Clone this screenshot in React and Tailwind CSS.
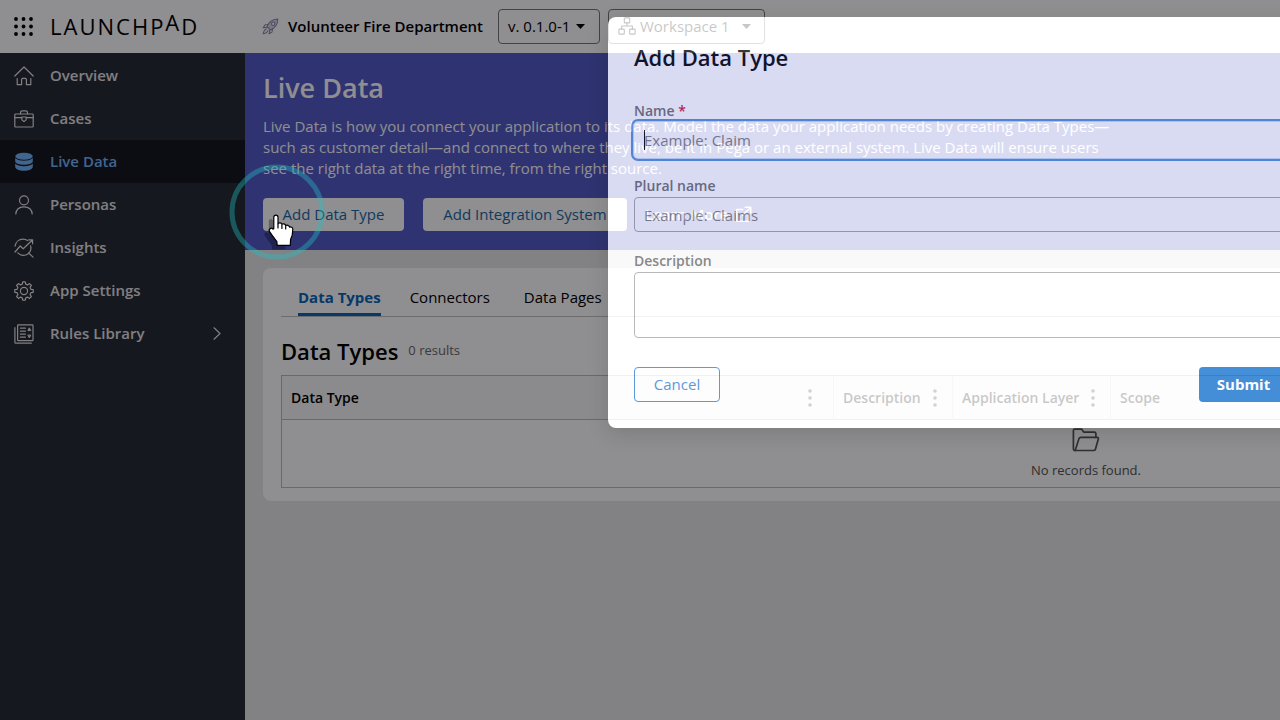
import React from "react";

const line = {
  fill: "none",
  stroke: "currentColor",
  strokeWidth: 1.2,
  strokeLinecap: "round",
  strokeLinejoin: "round",
};

function Icon({ children, size = 20, ...rest }) {
  return (
    <svg width={size} height={size} viewBox="0 0 20 20" aria-hidden="true" {...line} {...rest}>
      {children}
    </svg>
  );
}

const HomeIcon = () => (
  <Icon>
    <path d="M.8 10 10 1l9.200 9M3.200 12.500V18.600H7.600V13.500c0-.8.500-1.200 1.200-1.200h2.400c.7 0 1.200.4 1.200 1.200v5.100h4.400V12.500" />
  </Icon>
);

const CaseIcon = () => (
  <Icon>
    <rect x=".8" y="5" width="18.400" height="13" rx=".8" />
    <path d="M6.500 5V3.600C6.500 2.500 7.300 1.800 8.300 1.800h3.400c1 0 1.800.7 1.800 1.800V5M.8 8.600h6.800M12.400 8.600h6.800M7.800 8h4.400v2.200c0 1.200-1.300 1.800-2.200 2.400-.9-.6-2.200-1.200-2.200-2.400z" />
  </Icon>
);

const DatabaseIcon = () => (
  <Icon fill="currentColor" stroke="none">
    <ellipse cx="10" cy="4.200" rx="8.800" ry="3.500" />
    <path d="M1.200 5.800c1.200 2 5 2.900 8.800 2.900s7.600-.9 8.800-2.900v3.700c-.6 2.100-4.500 3.200-8.800 3.200S1.800 11.600 1.200 9.500z" />
    <path d="M1.200 11.500c1.400 1.900 5 2.700 8.800 2.700s7.400-.8 8.800-2.700v3.600c-.4 2.400-4.400 3.700-8.800 3.700s-8.400-1.300-8.800-3.700z" />
  </Icon>
);

const PersonIcon = () => (
  <Icon>
    <circle cx="10" cy="5.300" r="4.500" />
    <path d="M1.800 19c.3-4.500 3.600-7.200 8.200-7.200s7.900 2.700 8.200 7.200" />
  </Icon>
);

const InsightsIcon = () => (
  <Icon>
    <path d="M1 8.200C1.600 4 4.900 1.200 9 1.200c1.800 0 3.300.5 4.600 1.400M16.600 7.800c1.100 3.800-.7 7.600-4.200 8.900-3.300 1.200-6.500.2-8.600-1.900M14.600 14.800l4.400 4.400" />
    <path d="m1 14 5.200-6 3 2.800L18.400 2M14.600 1.800h4v4" />
  </Icon>
);

const GearIcon = () => (
  <Icon>
    <circle cx="10" cy="10" r="3.600" />
    <path d="M8.300 3.100 8.700.9h2.600l.4 2.200 1.900.8 1.900-1.300 1.900 1.900-1.300 1.900.8 1.900 2.300.4v2.600l-2.300.4-.8 1.900 1.300 1.900-1.900 1.900-1.900-1.300-1.900.8-.4 2.200H8.700l-.4-2.200-1.900-.8-1.900 1.300-1.900-1.900 1.300-1.900-.8-1.900L.8 11.300V8.700l2.300-.4.8-1.900-1.300-1.900 1.900-1.900 1.900 1.300z" />
  </Icon>
);

const RulesIcon = () => (
  <Icon>
    <rect x="3.600" y=".9" width="15.400" height="15.800" rx=".6" />
    <path d="M.9 3.600v14.800c0 .5.300.8.800.8h15.600M6.400 4.200h5M6.400 7.200h5M6.400 10.200h5M6.400 13.200h5" />
    <path d="m14 6.200 1.300-2.400 1.300 2.400zM14 11.400l1.300 2.400 1.300-2.400z" fill="currentColor" strokeWidth="1" />
  </Icon>
);

const RocketIcon = () => (
  <Icon size={17} className="text-[#8587a8]">
    <path d="M6 10.200C7.500 5.500 11.500 1.500 18.600 1.200c-.2 7-4.200 11.200-8.800 12.800z" fill="#d5d6ea" />
    <circle cx="13.200" cy="6.700" r="2" fill="#fff" />
    <path d="M7 7.600 3.400 8.200 1.400 11.600l4.600-.8M12.300 13l-.6 3.600-3.400 2 .9-4.600M5.200 12.800C2.800 13.300 2 15.500 1.400 18.600c2.800-.5 5-1.600 5.600-4" />
  </Icon>
);

const WorkspaceIcon = () => (
  <Icon size={18}>
    <rect x="7" y="1" width="6" height="5.500" rx=".8" />
    <rect x="1" y="13.500" width="6" height="5.500" rx=".8" />
    <rect x="13" y="13.500" width="6" height="5.500" rx=".8" />
    <path d="M10 6.500V10M4 13.500V10h12v3.500" />
  </Icon>
);

const FolderIcon = () => (
  <svg width="28" height="24" viewBox="0 0 28 24" aria-hidden="true" {...line} strokeWidth="1.700">
    <path d="M3.200 22.500C2 22.500 1.400 21.800 1.400 20.800V2.600c0-.9.600-1.500 1.500-1.500h6.600l2.200 3h10.600c1 0 1.600.6 1.600 1.600v3.600" />
    <path d="M3.200 22.500 7 10.600c.3-.9.800-1.300 1.700-1.300h16.400c1 0 1.500.7 1.200 1.700l-2.800 9.900c-.3 1-1 1.600-2 1.600z" />
  </svg>
);

const Caret = () => (
  <svg width="9" height="5" viewBox="0 0 9 5" aria-hidden="true">
    <path d="M0 0h9L4.500 5z" fill="currentColor" />
  </svg>
);

const nav = [
  { label: "Overview", Glyph: HomeIcon },
  { label: "Cases", Glyph: CaseIcon },
  { label: "Live Data", Glyph: DatabaseIcon, active: true },
  { label: "Personas", Glyph: PersonIcon },
  { label: "Insights", Glyph: InsightsIcon },
  { label: "App Settings", Glyph: GearIcon },
  { label: "Rules Library", Glyph: RulesIcon, more: true },
];

function Header() {
  return (
    <header className="flex h-[53px] shrink-0 items-center bg-white pb-px">
      <div className="flex w-[245px] shrink-0 items-center pl-3.5">
        <button type="button" aria-label="Apps" className="mr-[17px]">
          <svg width="19" height="19" viewBox="0 0 19 19" fill="#000" aria-hidden="true">
            {[2, 9.500, 17].map((y) =>
              [2, 9.500, 17].map((x) => <circle key={x + "-" + y} cx={x} cy={y} r="1.900" />)
            )}
          </svg>
        </button>
        <div className="flex gap-0.5 text-[22px] leading-7 text-black">
          <span>L</span>
          <span>A</span>
          <span>U</span>
          <span>N</span>
          <span>C</span>
          <span>H</span>
          <span>P</span>
          <span className="-mt-1">A</span>
          <span>D</span>
        </div>
      </div>
      <div className="flex items-center pl-[17px]">
        <RocketIcon />
        <span className="ml-[9px] w-[210px] text-[15px] font-semibold whitespace-nowrap text-black">
          Volunteer Fire Department
        </span>
        <button
          type="button"
          className="mr-2 flex h-[35px] w-[102px] items-center gap-1.5 rounded border border-[#777] pl-[9px] text-[15px] whitespace-nowrap text-black"
        >
          v. 0.1.0-1
          <Caret />
        </button>
        <button
          type="button"
          className="flex h-[35px] w-[157px] items-center gap-1 rounded border border-[#777] pl-[9px] text-[15px] whitespace-nowrap text-black"
        >
          <WorkspaceIcon />
          <span className="mr-2">Workspace 1</span>
          <Caret />
        </button>
      </div>
    </header>
  );
}

function Sidebar() {
  return (
    <nav aria-label="Main" className="w-[245px] shrink-0 bg-[#252c34] pt-px">
      {nav.map(({ label, Glyph, active, more }) => (
        <a
          key={label}
          href="#"
          className={
            active
              ? "flex h-[43px] items-center gap-4 bg-[#16191e] pr-6 pl-3.5 text-[15px] font-semibold text-[#75b5fb]"
              : "flex h-[43px] items-center gap-4 pr-6 pl-3.5 text-[15px] font-semibold text-[#e6e3e6]"
          }
        >
          <Glyph />
          <span className="grow">{label}</span>
          {more && (
            <svg width="8" height="13" viewBox="0 0 8 13" aria-hidden="true" {...line}>
              <path d="m1 .8 6 5.700-6 5.700" />
            </svg>
          )}
        </a>
      ))}
    </nav>
  );
}

const Kebab = () => (
  <svg width="4" height="18" viewBox="0 0 4 18" fill="#333" aria-hidden="true">
    <circle cx="2" cy="2" r="1.800" />
    <circle cx="2" cy="9" r="1.800" />
    <circle cx="2" cy="16" r="1.800" />
  </svg>
);

function Th({ children, menu = true, wide = false }) {
  return (
    <th className="border-r border-[#dedede] px-0 font-semibold">
      <div
        className={
          wide
            ? "flex items-center justify-between pr-[21px] pl-[9px]"
            : "flex items-center justify-between pr-[15px] pl-[9px]"
        }
      >
        {children}
        {menu && (
          <button type="button" aria-label={children + " column menu"}>
            <Kebab />
          </button>
        )}
      </div>
    </th>
  );
}

function Content() {
  return (
    <main className="min-w-0 grow overflow-hidden bg-[#e9e8ea]">
      <section className="h-[197px] bg-[#545cc8] px-[18px] pt-[19px] text-white">
        <h1 className="text-[27px] leading-8 font-semibold">Live Data</h1>
        <p className="mt-3 w-[858px] text-[15px] leading-[21px]">
          Live Data is how you connect your application to its data. Model the data your application
          needs by creating Data Types—such as customer detail—and connect to where they live, be it
          in Pega or an external system. Live Data will ensure users see the right data at the right
          time, from the right source.
        </p>
        <div className="mt-[19px] flex items-center">
          <button
            type="button"
            className="mr-[19px] h-[33px] w-[141px] rounded-sm bg-white text-[15px] whitespace-nowrap text-[#1b6ba8]"
          >
            Add Data Type
          </button>
          <button
            type="button"
            className="mr-[18px] h-[33px] w-[204px] rounded-sm bg-white text-[15px] whitespace-nowrap text-[#1b6ba8]"
          >
            Add Integration System
          </button>
          <a href="#" className="flex items-center gap-1.5 text-[15px] font-semibold whitespace-nowrap">
            Learn More
            <Icon size={17} strokeWidth="1.800">
              <path d="M9 4H2v14h14v-7M12 1.500h6.500V8M18 2 9 11" />
            </Icon>
          </a>
        </div>
      </section>

      <section className="m-[18px] w-[1646px] rounded-lg bg-white px-[18px] pt-[11px] pb-[13px] text-black">
        <div className="flex gap-[29px] border-b border-[#c4c4c4] pl-[17px] text-[15px]">
          <button
            type="button"
            className="border-b-[3px] border-[#0a67b8] pt-2 pb-1.5 leading-5 font-bold text-[#0a67b8]"
          >
            Data Types
          </button>
          <button type="button" className="pt-2 pb-[9px] leading-5">
            Connectors
          </button>
          <button type="button" className="pt-2 pb-[9px] pl-[5px] leading-5">
            Data Pages
          </button>
        </div>
        <div className="mt-[19px] flex items-center gap-2.5">
          <h2 className="text-[22px] leading-[30px] font-semibold">Data Types</h2>
          <span className="text-[13px] text-[#6a6a6a]">0 results</span>
        </div>
        <table className="mt-[9px] w-full table-fixed border-collapse border border-[#bdbdbd] text-left text-[14px]">
          <colgroup>
            <col className="w-[552px]" />
            <col className="w-[119px]" />
            <col className="w-[158px]" />
            <col />
          </colgroup>
          <thead>
            <tr className="h-11 border-b border-[#bdbdbd] bg-[#f8f7f8]">
              <Th wide>Data Type</Th>
              <Th>Description</Th>
              <Th>Application Layer</Th>
              <Th menu={false}>Scope</Th>
            </tr>
          </thead>
          <tbody>
            <tr className="h-[68px]">
              <td colSpan="4" className="p-0 text-[13px] text-[#555]">
                <div className="flex flex-col items-center gap-2">
                  <FolderIcon />
                  <span className="leading-5">No records found.</span>
                </div>
              </td>
            </tr>
          </tbody>
        </table>
      </section>
    </main>
  );
}

function AddDataTypeDialog() {
  return (
    <div
      role="dialog"
      aria-labelledby="dialog-title"
      className="absolute top-[17px] left-[608px] w-[706px] rounded-lg bg-white p-[26px] pt-[25px] opacity-78 shadow-[0_6px_20px_rgba(0,0,0,0.2),0_0_0_2000px_rgba(2,0,4,0.565)]"
    >
      <h2 id="dialog-title" className="text-[22px] leading-[30px] font-semibold text-black">
        Add Data Type
      </h2>
      <form className="mt-[29px] text-[14px]" onSubmit={(e) => e.preventDefault()}>
        <label htmlFor="name" className="block leading-5 font-semibold text-[#6c6c6c]">
          Name <span className="text-[#d0103a]">*</span>
        </label>
        <div className="relative mt-px">
          <input
            id="name"
            type="text"
            placeholder="Example: Claim"
            className="block h-[36px] w-full rounded bg-white px-2.5 text-[15px] shadow-[0_0_0_1px_#c5dcf8,0_0_0_3px_#4f90db] outline-none placeholder:text-[#7c7c7c]"
          />
          <span className="absolute top-2 left-2.5 h-5 w-px bg-black" />
        </div>
        <label htmlFor="plural" className="mt-[18px] block leading-5 font-semibold text-[#6c6c6c]">
          Plural name
        </label>
        <input
          id="plural"
          type="text"
          placeholder="Example: Claims"
          className="mt-px block h-[35px] w-full rounded border border-[#a6a6a6] bg-white px-[9px] text-[15px] outline-none placeholder:text-[#7c7c7c]"
        />
        <label htmlFor="desc" className="mt-[19px] block leading-5 font-semibold text-[#6c6c6c]">
          Description
        </label>
        <textarea
          id="desc"
          className="mt-px block h-[66px] w-full resize-none rounded border border-[#a6a6a6] bg-white outline-none"
        />
        <div className="mt-[29px] flex justify-between text-[15px]">
          <button
            type="button"
            className="h-[35px] w-[86px] rounded border border-[#2f80d4] text-[#2f80d4]"
          >
            Cancel
          </button>
          <button type="submit" className="h-[35px] w-[89px] rounded bg-[#1270cf] font-bold text-white">
            Submit
          </button>
        </div>
      </form>
    </div>
  );
}

function Pointer() {
  return (
    <div className="pointer-events-none absolute top-[164px] left-[228px]">
      <svg width="98" height="98" viewBox="0 0 98 98" aria-hidden="true">
        <circle cx="49" cy="48" r="45" fill="none" stroke="#22c3c4" strokeOpacity=".38" strokeWidth="5" />
        <g transform="translate(40 49)">
          <path
            d="M5.800 15.500V4.200c0-2.900 4.200-2.900 4.200 0v6.600c.6-1.400 3.500-1.300 3.900.6.900-1 3.400-.6 3.800 1.200 1-.9 3.600-.4 3.900 1.600 1.300-.8 3.200.1 3.200 2 0 3.800-.4 7-2.200 10.200l-.3 6H9.200l-.4-4C6.500 25.500 4 22.500 1.600 18.600c-1.500-2.600 1.700-4.500 3.400-2.400z"
            transform="translate(-5 4)"
            fill="#000"
            fillOpacity=".3"
          />
          <path
            d="M5.800 15.500V4.200c0-2.900 4.200-2.900 4.200 0v6.600c.6-1.400 3.500-1.300 3.900.6.900-1 3.400-.6 3.800 1.200 1-.9 3.600-.4 3.900 1.600 1.300-.8 3.200.1 3.200 2 0 3.800-.4 7-2.200 10.200l-.3 6H9.200l-.4-4C6.500 25.500 4 22.500 1.600 18.600c-1.500-2.600 1.700-4.500 3.400-2.400z"
            fill="#fff"
            stroke="#000"
            strokeWidth="1.200"
            strokeLinejoin="round"
          />
          <path d="M10 11v4M13.900 12v3.500M17.700 13v3" stroke="#000" strokeWidth="1.200" strokeLinecap="round" />
        </g>
      </svg>
    </div>
  );
}

export default function App() {
  return (
    <div className="relative flex min-h-screen flex-col overflow-hidden font-['Open_Sans',sans-serif]">
      <Header />
      <div className="flex grow">
        <Sidebar />
        <Content />
      </div>
      <AddDataTypeDialog />
      <Pointer />
    </div>
  );
}
